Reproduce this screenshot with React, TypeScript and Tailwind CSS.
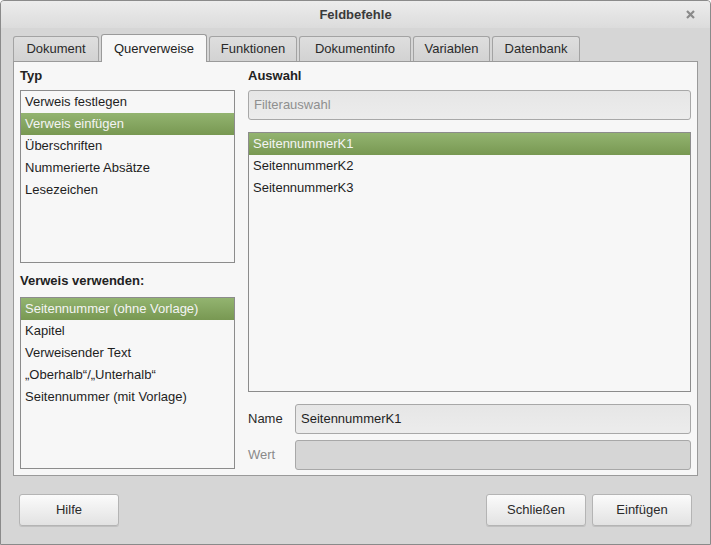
import React from "react";

const font = { fontFamily: '"Liberation Sans", Arial, sans-serif' };

const tabs = [
  { label: "Dokument", w: "w-[86px]" },
  { label: "Querverweise", w: "w-[106px]", active: true },
  { label: "Funktionen", w: "w-[88px]" },
  { label: "Dokumentinfo", w: "w-[112px]" },
  { label: "Variablen", w: "w-[77px]" },
  { label: "Datenbank", w: "w-[88px]" },
];

function ListBox({ items, selected, className }: { items: string[]; selected: number; className: string }) {
  return (
    <div className={`border border-[#8c8c8c] bg-[#f7f7f7] ${className}`}>
      {items.map((it, i) => (
        <div
          key={it}
          className={
            i === selected
              ? "h-[22px] flex items-center px-[4px] text-[#f4f4f4] bg-gradient-to-b from-[#93b470] to-[#789852]"
              : "h-[22px] flex items-center px-[4px] text-[#1e1e1e]"
          }
        >
          {it}
        </div>
      ))}
    </div>
  );
}

function Button({ label }: { label: string }) {
  return (
    <button className="w-[100px] h-[32px] rounded-[3px] border border-[#b4b4b4] bg-gradient-to-b from-[#fbfbfb] to-[#e2e2e2] shadow-[0_1px_0_#c0c0c0] text-[13px] text-[#2a2a2a]">
      {label}
    </button>
  );
}

export default function App() {
  return (
    <div style={font} className="w-[711px] h-[545px] text-[13px] bg-[#d6d6d6] border border-[#8a8a8a] rounded-t-[4px] flex flex-col overflow-hidden">
      <div className="h-[27px] shrink-0 relative flex items-center justify-center bg-gradient-to-b from-[#ececec] to-[#dcdcdc]">
        <span className="font-bold text-[#3a3a3a] text-[13px]">Feldbefehle</span>
        <svg className="absolute right-[15px] top-[9px]" width="9" height="9" viewBox="0 0 9 9">
          <path d="M1 1L8 8M8 1L1 8" stroke="#8a8a8a" strokeWidth="2.2" />
        </svg>
      </div>

      <div className="flex items-end gap-[2px] pl-[12px] h-[33px] shrink-0">
        {tabs.map((t) =>
          t.active ? (
            <div
              key={t.label}
              className={`${t.w} h-[28px] -mb-px relative z-10 flex items-center justify-center rounded-t-[3px] border border-b-0 border-[#9a9a9a] bg-[#f7f7f7] text-[#222]`}
            >
              {t.label}
            </div>
          ) : (
            <div
              key={t.label}
              className={`${t.w} h-[25px] flex items-center justify-center rounded-t-[3px] border border-b-0 border-[#a3a3a3] bg-gradient-to-b from-[#dedede] to-[#d2d2d2] text-[#2a2a2a]`}
            >
              {t.label}
            </div>
          )
        )}
      </div>

      <div className="mx-[12px] h-[415px] shrink-0 border border-[#9a9a9a] bg-[#f7f7f7] flex gap-[13px] pl-[6px] pr-[6px] pt-[7px]">
        <div className="w-[215px] flex flex-col">
          <div className="h-[21px] font-bold text-[#222] leading-[14px]">Typ</div>
          <ListBox
            className="h-[173px]"
            selected={1}
            items={["Verweis festlegen", "Verweis einfügen", "Überschriften", "Nummerierte Absätze", "Lesezeichen"]}
          />
          <div className="h-[34px] flex items-end pb-[7px] font-bold text-[#222]">Verweis verwenden:</div>
          <ListBox
            className="h-[172px]"
            selected={0}
            items={[
              "Seitennummer (ohne Vorlage)",
              "Kapitel",
              "Verweisender Text",
              "„Oberhalb“/„Unterhalb“",
              "Seitennummer (mit Vorlage)",
            ]}
          />
        </div>

        <div className="flex-1 flex flex-col">
          <div className="h-[21px] font-bold text-[#222] leading-[14px]">Auswahl</div>
          <div className="h-[30px] rounded-[3px] border border-[#a8a8a8] bg-gradient-to-b from-[#e6e6e6] to-[#ececec] flex items-center px-[5px] text-[#8f8f8f]">
            Filterauswahl
          </div>
          <ListBox
            className="h-[260px] mt-[12px]"
            selected={0}
            items={["SeitennummerK1", "SeitennummerK2", "SeitennummerK3"]}
          />
          <div className="flex items-center mt-[12px]">
            <div className="w-[47px] text-[#2a2a2a]">Name</div>
            <div className="flex-1 h-[30px] rounded-[3px] border border-[#a8a8a8] bg-gradient-to-b from-[#e6e6e6] to-[#ececec] flex items-center px-[5px] text-[#1e1e1e]">
              SeitennummerK1
            </div>
          </div>
          <div className="flex items-center mt-[6px]">
            <div className="w-[47px] text-[#8a8a8a]">Wert</div>
            <div className="flex-1 h-[30px] rounded-[3px] border border-[#a8a8a8] bg-[#d6d6d6]" />
          </div>
        </div>
      </div>

      <div className="flex items-center justify-between pl-[18px] pr-[18px] pt-[18px]">
        <Button label="Hilfe" />
        <div className="flex gap-[6px]">
          <Button label="Schließen" />
          <Button label="Einfügen" />
        </div>
      </div>
    </div>
  );
}
